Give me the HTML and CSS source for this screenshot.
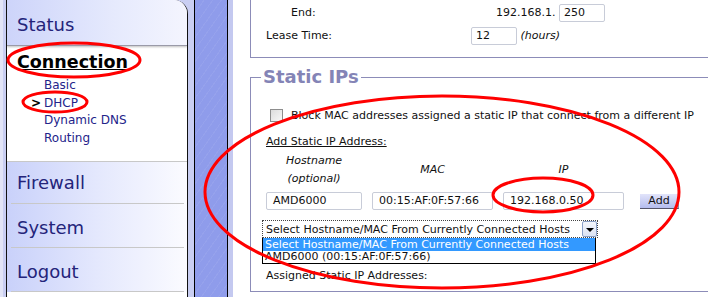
FILE: index.html
```html
<!DOCTYPE html>
<html lang="en">
<head>
  <meta charset="UTF-8">
  <title>Router - DHCP</title>
  <link rel="stylesheet" href="styles.css">
</head>
<body>

<div class="page">
  <div class="side">
    <div class="panel">
      <div class="nav-head">Status</div>
      <div class="nav-open">
        <div class="nav-title">Connection</div>
        <ul class="sub">
          <li>Basic</li>
          <li class="current">DHCP</li>
          <li>Dynamic DNS</li>
          <li>Routing</li>
        </ul>
      </div>
      <div class="nav-row first">Firewall</div>
      <div class="nav-row">System</div>
      <div class="nav-row">Logout</div>
    </div>
  </div>
  <div class="strip"></div>
  <div class="gap"></div>

  <div class="main">
    <div class="box dhcp">
      <div class="row">
        <span class="label indent">End:</span>
        <span class="value indent">192.168.1. <span class="field w45">250</span></span>
      </div>
      <div class="row">
        <span class="label">Lease Time:</span>
        <span class="value"><span class="field w45">12</span> <em>(hours)</em></span>
      </div>
    </div>

    <fieldset class="box statics">
      <legend>Static IPs</legend>
      <div class="check-line">
        <span class="checkbox"></span>
        Block MAC addresses assigned a static IP that connect from a different IP
      </div>
      <div class="add-title">Add Static IP Address:</div>
      <div class="cols heads">
        <span class="c-host"><em>Hostname</em><em>(optional)</em></span>
        <span class="c-mac"><em>MAC</em></span>
        <span class="c-ip"><em>IP</em></span>
      </div>
      <div class="cols inputs">
        <span class="field c-host">AMD6000</span>
        <span class="field c-mac">00:15:AF:0F:57:66</span>
        <span class="field c-ip">192.168.0.50</span>
        <span class="btn">Add</span>
      </div>
      <div class="picker">
        <div class="select">
          <span class="select-text">Select Hostname/MAC From Currently Connected Hosts</span>
          <span class="arrow"></span>
        </div>
        <div class="options">
          <div class="opt on">Select Hostname/MAC From Currently Connected Hosts</div>
          <div class="opt">AMD6000 (00:15:AF:0F:57:66)</div>
        </div>
      </div>
      <div class="assigned">Assigned Static IP Addresses:</div>
    </fieldset>
  </div>

  <svg class="marks" width="708" height="297" viewBox="0 0 708 297">
    <ellipse cx="74" cy="60" rx="66" ry="17" />
    <ellipse cx="55" cy="102" rx="32" ry="10" />
    <ellipse cx="442" cy="192" rx="237" ry="96" />
    <ellipse cx="543" cy="195" rx="50" ry="17" />
  </svg>
</div>

</body>
</html>
```

FILE: styles.css
```css
* {
  box-sizing: border-box;
  margin: 0;
  padding: 0;
}
body {
  background: #fff;
  font-family: "DejaVu Sans", Verdana, sans-serif;
  font-size: 11px;
  color: #111;
  overflow: hidden;
}
.page {
  position: relative;
  display: flex;
  width: 708px;
  height: 297px;
  overflow: hidden;
}

/* left navigation */
.side {
  width: 195px;
  flex: none;
  padding: 0 6px 0 3px;
  background: #c9cef2;
  border-left: 3px solid #e2e4f6;
  border-right: 1px solid #000;
}
.panel {
  height: 100%;
  background: #fff;
  border-left: 1px solid #111;
  border-right: 1px solid #111;
  border-top-right-radius: 14px;
  overflow: hidden;
}
.nav-head {
  height: 46px;
  padding: 14px 0 0 10px;
  font-size: 18px;
  line-height: 22px;
  color: #24247a;
  background: linear-gradient(90deg, #cdd4fa 0%, #e6eafd 60%, #f4f5fe 100%);
  border-bottom: 1px solid #9a9aa8;
  box-shadow: 0 1px 2px rgba(0,0,0,0.25);
}
.nav-open {
  height: 115px;
  padding: 4px 0 0 10px;
}
.nav-title {
  font-size: 17.5px;
  font-weight: bold;
  color: #000;
  text-decoration: underline;
  line-height: 24px;
}
.sub {
  list-style: none;
  margin-top: 3px;
  padding-left: 27px;
  font-size: 12px;
  color: #23238a;
  line-height: 17.6px;
}
.sub .current {
  position: relative;
}
.sub .current::before {
  content: ">";
  position: absolute;
  left: -13px;
  font-weight: bold;
  color: #000;
}
.nav-row {
  height: 44px;
  padding: 14px 0 0 10px;
  font-size: 18px;
  line-height: 22px;
  color: #24247a;
  background: linear-gradient(90deg, #c9d1fa 0%, #e4e8fd 50%, #fbfbff 100%);
  position: relative;
}
.nav-row::before {
  content: "";
  position: absolute;
  top: 0;
  left: 4px;
  right: 3px;
  border-top: 1px solid #c8c8c8;
}
.nav-row.first {
  height: 42px;
  padding-top: 11px;
}
.nav-row.first::before {
  left: 0;
  right: 0;
}
.nav-row:last-child {
  height: 45px;
}
.nav-row:last-child::after {
  content: "";
  position: absolute;
  bottom: 0;
  left: 4px;
  right: 3px;
  border-top: 1px solid #c8c8c8;
}
.strip {
  width: 33px;
  flex: none;
  border-right: 1px solid #000;
  background:
    repeating-linear-gradient(125deg, rgba(255,255,255,0.06) 0 1px, transparent 1px 7px),
    #8f9ceb;
}
.gap {
  width: 5px;
  flex: none;
  background: #c4c9f0;
}

/* main content */
.main {
  flex: 1;
  padding-left: 17px;
  overflow: hidden;
}
.box {
  width: 480px;
  border: 1px solid #8c8cb8;
}
.dhcp {
  border-top: none;
  height: 58px;
  padding: 1px 0 0 15px;
}
.row {
  display: flex;
  align-items: center;
  height: 23px;
}
.label {
  width: 205px;
}
.label.indent {
  padding-left: 25px;
}
.value.indent {
  padding-left: 25px;
}
.field {
  display: inline-block;
  height: 18px;
  line-height: 16px;
  padding-left: 4px;
  border: 1px solid #c8ccd8;
  border-radius: 2px;
  background: #fff;
  vertical-align: middle;
}
.w45 {
  width: 46px;
}
em {
  font-style: italic;
}
.statics {
  margin-top: 8px;
  height: 226px;
  padding: 0 0 0 15px;
}
.statics legend {
  margin-left: -5px;
  padding: 0 2px;
  font-size: 18px;
  font-weight: bold;
  color: #8484b6;
  line-height: 22px;
}
.check-line {
  display: flex;
  align-items: center;
  gap: 8px;
  margin-top: 21px;
  padding-left: 4px;
}
.checkbox {
  width: 13px;
  height: 13px;
  border: 1px solid #8d8d8d;
  background: linear-gradient(135deg, #dcdcdc, #f8f8f8);
}
.add-title {
  margin-top: 13px;
  text-decoration: underline;
}
.cols {
  display: flex;
  align-items: center;
}
.c-host {
  width: 96px;
}
.c-mac {
  width: 121px;
  margin-left: 10px;
}
.c-ip {
  width: 121px;
  margin-left: 10px;
}
.heads {
  margin-top: 4px;
  height: 35px;
}
.heads span {
  display: flex;
  flex-direction: column;
  align-items: center;
  line-height: 18px;
}
.inputs {
  margin-top: 5px;
}
.inputs .field {
  padding-left: 6px;
}
.btn {
  margin-left: 16px;
  width: 39px;
  height: 15px;
  line-height: 13px;
  text-align: center;
  background: linear-gradient(#e2e4fa, #b4bcee);
  border-bottom: 1px solid #55556a;
  border-right: 1px solid #9090a8;
}
.picker {
  margin: 10px 0 0 -4px;
  width: 336px;
}
.select {
  display: flex;
  align-items: center;
  justify-content: space-between;
  height: 18px;
  border: 1px dotted #444;
  padding-left: 3px;
}
.arrow {
  width: 15px;
  height: 16px;
  border: 1px solid #8aa0c8;
  border-radius: 2px;
  background: linear-gradient(#f4f6fc, #dbe3f3);
  position: relative;
}
.arrow::after {
  content: "";
  position: absolute;
  left: 3px;
  top: 6px;
  border-left: 4px solid transparent;
  border-right: 4px solid transparent;
  border-top: 4px solid #000;
}
.options {
  width: 334px;
  border: 1px solid #000;
  border-top: none;
}
.opt {
  height: 12px;
  line-height: 12px;
  padding-left: 2px;
}
.opt.on {
  height: 13px;
  line-height: 13px;
  background: #3399ff;
  color: #fff;
}
.assigned {
  margin-top: 5px;
}

/* red annotation marks */
.marks {
  position: absolute;
  left: 0;
  top: 0;
  pointer-events: none;
}
.marks ellipse {
  fill: none;
  stroke: #f00;
  stroke-width: 3;
}
```
